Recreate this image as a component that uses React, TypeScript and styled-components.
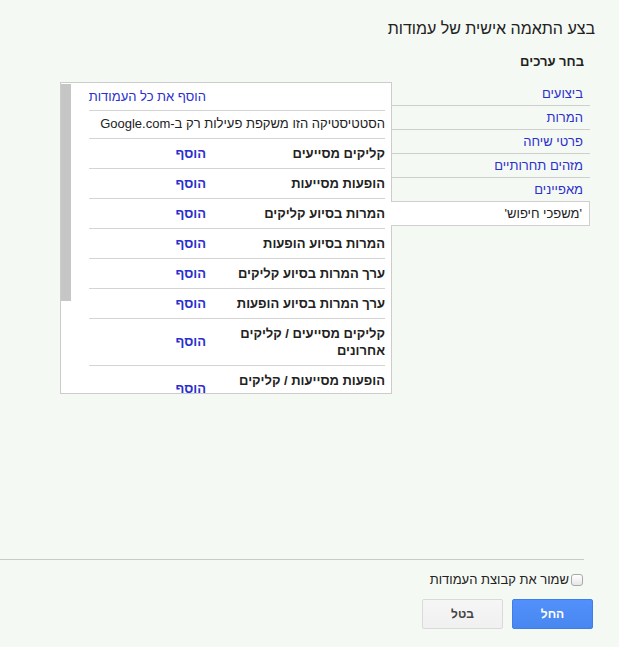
import styled, { createGlobalStyle } from "styled-components";

const GlobalStyle = createGlobalStyle`
  html, body {
    margin: 0;
    padding: 0;
    background: #f5f9f3;
  }
  body {
    font-family: "Liberation Sans", "DejaVu Sans", Arial, sans-serif;
    color: #222222;
  }
`;

interface MetricRow {
  name: string;
}

const categories = [
  "ביצועים",
  "המרות",
  "פרטי שיחה",
  "מזהים תחרותיים",
  "מאפיינים",
  "'משפכי חיפוש'",
];

const metrics: MetricRow[] = [
  { name: "קליקים מסייעים" },
  { name: "הופעות מסייעות" },
  { name: "המרות בסיוע קליקים" },
  { name: "המרות בסיוע הופעות" },
  { name: "ערך המרות בסיוע קליקים" },
  { name: "ערך המרות בסיוע הופעות" },
  { name: "קליקים מסייעים / קליקים אחרונים" },
  { name: "הופעות מסייעות / קליקים אחרונים" },
  { name: "המרות בסיוע קליקים / המרות מקליק אחרון" },
  { name: "המרות בסיוע הופעות / המרות מקליק אחרון" },
];

export default function App() {
  const selected = categories.length - 1;

  return (
    <Page>
      <GlobalStyle />
      <Title>בצע התאמה אישית של עמודות</Title>
      <SectionTitle>בחר ערכים</SectionTitle>

      <Columns>
        <CategoryList>
          {categories.map((c, i) => (
            <CategoryItem key={c} $active={i === selected}>
              {c}
            </CategoryItem>
          ))}
        </CategoryList>

        <MetricPanel>
          <ScrollThumb />
          <MetricList>
            <MetricRowBox>
              <NameCell />
              <ActionLink $bold={false}>הוסף את כל העמודות</ActionLink>
            </MetricRowBox>
            <NoteRow>הסטטיסטיקה הזו משקפת פעילות רק ב-Google.com</NoteRow>
            {metrics.map((m) => (
              <MetricRowBox key={m.name}>
                <NameCell>{m.name}</NameCell>
                <ActionLink $bold>הוסף</ActionLink>
              </MetricRowBox>
            ))}
          </MetricList>
        </MetricPanel>
      </Columns>

      <Footer>
        <Divider />
        <SaveRow>
          <Checkbox type="checkbox" id="save-set" />
          <SaveLabel htmlFor="save-set">שמור את קבוצת העמודות</SaveLabel>
        </SaveRow>
        <ButtonsRow>
          <PrimaryButton>החל</PrimaryButton>
          <SecondaryButton>בטל</SecondaryButton>
        </ButtonsRow>
      </Footer>
    </Page>
  );
}

const Page = styled.div`
  direction: rtl;
  width: 619px;
  height: 647px;
  display: flex;
  flex-direction: column;
  box-sizing: border-box;
  overflow: hidden;
`;

const Title = styled.div`
  margin: 19px 24px 0 0;
  font-size: 16px;
  line-height: 20px;
  color: #222222;
`;

const SectionTitle = styled.div`
  margin: 15px 35px 0 0;
  font-size: 13px;
  font-weight: 700;
  line-height: 16px;
  color: #222222;
`;

const Columns = styled.div`
  display: flex;
  flex-direction: row;
  align-items: flex-start;
  margin: 12px 29px 0 0;
`;

const CategoryList = styled.div`
  display: flex;
  flex-direction: column;
  width: 198px;
  flex: none;
`;

const CategoryItem = styled.div<{ $active: boolean }>`
  position: relative;
  z-index: ${(p) => (p.$active ? 1 : 0)};
  height: 23px;
  line-height: 23px;
  padding-right: 7px;
  margin-left: ${(p) => (p.$active ? "-1px" : "0")};
  font-size: 13px;
  color: ${(p) => (p.$active ? "#222222" : "#2a2fcf")};
  background: ${(p) => (p.$active ? "#ffffff" : "transparent")};
  border-bottom: 1px solid #cfcfcf;
  border-right: ${(p) => (p.$active ? "1px solid #cfcfcf" : "none")};
  white-space: nowrap;
`;

const MetricPanel = styled.div`
  position: relative;
  width: 332px;
  height: 312px;
  box-sizing: border-box;
  flex: none;
  background: #ffffff;
  border: 1px solid #cccccc;
  overflow: hidden;
`;

const ScrollThumb = styled.div`
  position: absolute;
  left: 0;
  top: 1px;
  width: 10px;
  height: 217px;
  background: #c6c6c6;
`;

const MetricList = styled.div`
  padding: 0 6px 0 28px;
`;

const MetricRowBox = styled.div`
  display: grid;
  grid-template-columns: 179px 1fr;
  align-items: center;
  padding: 6px 0;
  border-bottom: 1px solid #d4d4d4;
  min-height: 17px;

  &:first-child {
    padding: 6px 0 5px;
    min-height: 16px;
  }
`;

const NoteRow = styled.div`
  padding: 5px 0 6px;
  font-size: 13px;
  line-height: 16px;
  color: #222222;
  border-bottom: 1px solid #d4d4d4;
  white-space: nowrap;
`;

const NameCell = styled.div`
  padding-left: 28px;
  font-size: 13px;
  font-weight: 700;
  line-height: 17px;
  color: #222222;
`;

const ActionLink = styled.a<{ $bold: boolean }>`
  font-size: 13px;
  line-height: 16px;
  font-weight: ${(p) => (p.$bold ? 700 : 400)};
  color: #2a2fcf;
  text-decoration: none;
  cursor: pointer;
  white-space: nowrap;
`;

const Footer = styled.div`
  margin-top: auto;
  display: flex;
  flex-direction: column;
  padding-bottom: 18px;
`;

const Divider = styled.div`
  height: 1px;
  background: #cacaca;
  margin-right: 35px;
`;

const SaveRow = styled.div`
  display: flex;
  align-items: center;
  gap: 2px;
  margin: 12px 36px 0 0;
  height: 16px;
`;

const Checkbox = styled.input`
  appearance: none;
  width: 12px;
  height: 12px;
  margin: 0;
  border: 1px solid #a9a9a9;
  border-radius: 3px;
  background: linear-gradient(#ffffff, #e6e6e6);
  box-sizing: border-box;
`;

const SaveLabel = styled.label`
  font-size: 13px;
  line-height: 16px;
  color: #222222;
`;

const ButtonsRow = styled.div`
  display: flex;
  gap: 9px;
  margin: 11px 26px 0 0;
`;

const BaseButton = styled.button`
  width: 81px;
  height: 30px;
  box-sizing: border-box;
  border-radius: 2px;
  font-family: "Liberation Sans", "DejaVu Sans", Arial, sans-serif;
  font-size: 12px;
  font-weight: 700;
  cursor: pointer;
  padding: 0;
`;

const PrimaryButton = styled(BaseButton)`
  color: #ffffff;
  background: linear-gradient(#5290fb, #4886f0);
  border: 1px solid #3f7ee8;
`;

const SecondaryButton = styled(BaseButton)`
  color: #444444;
  background: linear-gradient(#f6f6f6, #f0f0f0);
  border: 1px solid #d9d9d9;
`;
